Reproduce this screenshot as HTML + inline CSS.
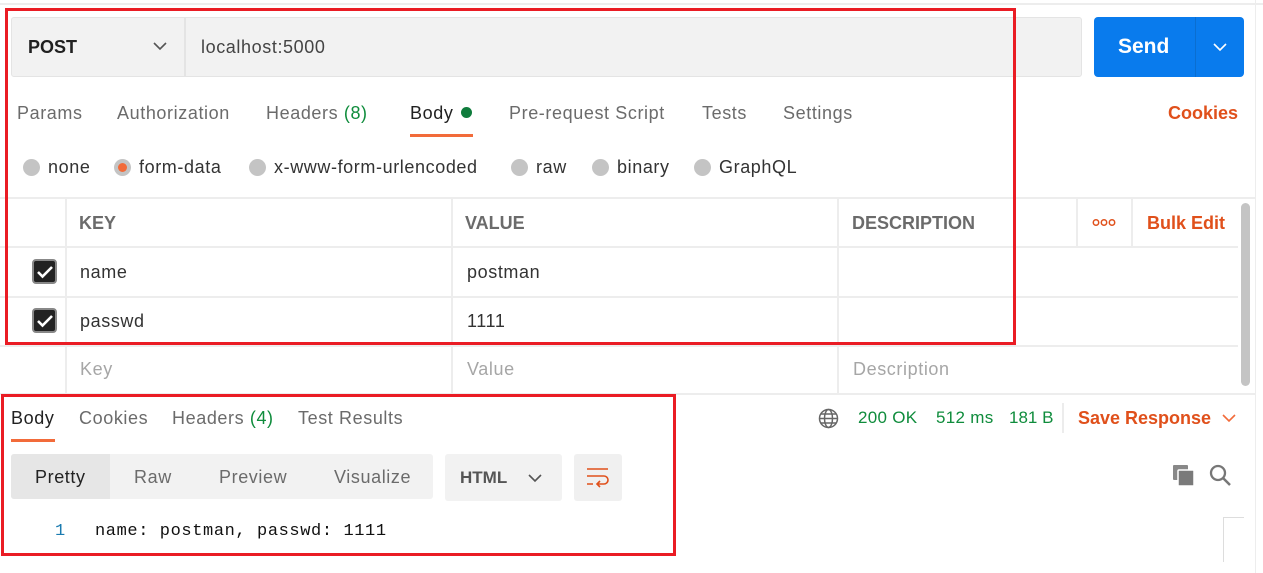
<!DOCTYPE html>
<html><head><meta charset="utf-8"><style>
*{margin:0;padding:0;box-sizing:border-box}
body{width:1263px;height:573px;background:#fff;position:relative;overflow:hidden;font-family:"Liberation Sans",sans-serif;font-size:18px;color:#212121;letter-spacing:0.6px}
.a{position:absolute;white-space:nowrap}
.b{font-weight:bold;letter-spacing:0}
.hl{position:absolute;height:2px;background:#ededed}
.vl{position:absolute;width:2px;background:#ededed}
.g{color:#6b6b6b}
.o{color:#e0501b}
.gr{color:#0f8c3c}
.rad{position:absolute;width:17px;height:17px;border-radius:50%;background:#c4c4c4}
.cb{position:absolute;width:25px;height:25px;background:#222;border:2px solid #888;border-radius:4px}
.red{position:absolute;border:3px solid #ea1c24}
</style></head><body>
<div class="hl" style="left:0;top:3px;width:1263px"></div>
<div class="vl" style="left:1255px;top:0;height:573px;width:1px"></div>

<div class="a" style="left:11px;top:17px;width:1071px;height:60px;background:#f2f2f2;border:1px solid #e4e4e4;border-radius:3px"></div>
<div class="vl" style="left:184px;top:18px;height:58px;background:#e4e4e4"></div>
<div class="a b" style="left:28px;top:37px;font-size:18px;color:#212121">POST</div>
<svg class="a" style="left:153px;top:42px" width="14" height="9"><path d="M1 1l6 6 6-6" stroke="#555" stroke-width="1.6" fill="none"/></svg>
<div class="a" style="left:201px;top:37px;color:#444">localhost:5000</div>

<div class="a" style="left:1094px;top:17px;width:150px;height:60px;background:#097bed;border-radius:4px"></div>
<div class="a" style="left:1195px;top:17px;width:1px;height:60px;background:#0a6ed0"></div>
<div class="a b" style="left:1118px;top:35px;color:#fff;font-size:21px">Send</div>
<svg class="a" style="left:1213px;top:43px" width="14" height="9"><path d="M1 1l6 6 6-6" stroke="#fff" stroke-width="1.6" fill="none"/></svg>

<div class="a g" style="left:17px;top:103px">Params</div>
<div class="a g" style="left:117px;top:103px">Authorization</div>
<div class="a g" style="left:266px;top:103px">Headers <span class="gr">(8)</span></div>
<div class="a" style="left:410px;top:103px">Body</div>
<div class="a" style="left:461px;top:107px;width:11px;height:11px;border-radius:50%;background:#0f7c3c"></div>
<div class="a" style="left:410px;top:134px;width:63px;height:3px;background:#f26b3a"></div>
<div class="a g" style="left:509px;top:103px">Pre-request Script</div>
<div class="a g" style="left:702px;top:103px">Tests</div>
<div class="a g" style="left:783px;top:103px">Settings</div>
<div class="a o b" style="left:1168px;top:103px">Cookies</div>

<div class="rad" style="left:23px;top:159px"></div><div class="a" style="left:48px;top:157px;color:#333">none</div>
<div class="rad" style="left:114px;top:159px"></div><div class="a" style="left:118px;top:163px;width:9px;height:9px;border-radius:50%;background:#f26b3a"></div><div class="a" style="left:139px;top:157px;color:#333">form-data</div>
<div class="rad" style="left:249px;top:159px"></div><div class="a" style="left:274px;top:157px;color:#333">x-www-form-urlencoded</div>
<div class="rad" style="left:511px;top:159px"></div><div class="a" style="left:536px;top:157px;color:#333">raw</div>
<div class="rad" style="left:592px;top:159px"></div><div class="a" style="left:617px;top:157px;color:#333">binary</div>
<div class="rad" style="left:694px;top:159px"></div><div class="a" style="left:719px;top:157px;color:#333">GraphQL</div>

<div class="hl" style="left:0;top:197px;width:1255px"></div>
<div class="hl" style="left:0;top:246px;width:1238px"></div>
<div class="hl" style="left:0;top:296px;width:1238px"></div>
<div class="hl" style="left:0;top:345px;width:1238px"></div>
<div class="hl" style="left:0;top:393px;width:1255px"></div>
<div class="vl" style="left:65px;top:198px;height:195px"></div>
<div class="vl" style="left:451px;top:198px;height:195px"></div>
<div class="vl" style="left:837px;top:198px;height:195px"></div>
<div class="vl" style="left:1076px;top:198px;height:49px"></div>
<div class="vl" style="left:1131px;top:198px;height:49px"></div>
<div class="a" style="left:1241px;top:203px;width:9px;height:183px;border-radius:5px;background:#c4c4c4"></div>

<div class="a g b" style="left:79px;top:213px">KEY</div>
<div class="a g b" style="left:465px;top:213px">VALUE</div>
<div class="a g b" style="left:852px;top:213px">DESCRIPTION</div>
<svg class="a" style="left:1092px;top:218px" width="24" height="9"><g stroke="#e0501b" stroke-width="1.5" fill="none"><circle cx="4" cy="4.5" r="2.7"/><circle cx="12" cy="4.5" r="2.7"/><circle cx="20" cy="4.5" r="2.7"/></g></svg>
<div class="a o b" style="left:1147px;top:213px">Bulk Edit</div>

<div class="cb" style="left:32px;top:259px"></div>
<svg class="a" style="left:36px;top:264px" width="18" height="15"><path d="M2 8l4.5 4.5L16 3" stroke="#fff" stroke-width="2.6" fill="none"/></svg>
<div class="a" style="left:80px;top:262px;color:#333">name</div>
<div class="a" style="left:467px;top:262px;color:#333">postman</div>
<div class="cb" style="left:32px;top:308px"></div>
<svg class="a" style="left:36px;top:313px" width="18" height="15"><path d="M2 8l4.5 4.5L16 3" stroke="#fff" stroke-width="2.6" fill="none"/></svg>
<div class="a" style="left:80px;top:311px;color:#333">passwd</div>
<div class="a" style="left:467px;top:311px;color:#333">1111</div>
<div class="a" style="left:80px;top:359px;color:#a6a6a6">Key</div>
<div class="a" style="left:467px;top:359px;color:#a6a6a6">Value</div>
<div class="a" style="left:853px;top:359px;color:#a6a6a6">Description</div>

<div class="a" style="left:11px;top:408px;color:#212121">Body</div>
<div class="a" style="left:11px;top:439px;width:44px;height:3px;background:#f26b3a"></div>
<div class="a g" style="left:79px;top:408px">Cookies</div>
<div class="a g" style="left:172px;top:408px">Headers <span class="gr">(4)</span></div>
<div class="a g" style="left:298px;top:408px">Test Results</div>

<svg class="a" style="left:818px;top:408px" width="21" height="21"><g stroke="#666" stroke-width="1.5" fill="none"><circle cx="10.5" cy="10.5" r="9"/><ellipse cx="10.5" cy="10.5" rx="4" ry="9"/><path d="M1.5 10.5h18M3 6h15M3 15h15"/></g></svg>
<div class="a gr" style="left:858px;top:408px;font-size:17px;letter-spacing:0.3px">200 OK</div>
<div class="a gr" style="left:936px;top:408px;font-size:17px;letter-spacing:0.3px">512 ms</div>
<div class="a gr" style="left:1009px;top:408px;font-size:17px;letter-spacing:0">181 B</div>
<div class="a" style="left:1062px;top:403px;width:2px;height:30px;background:#ececec"></div>
<div class="a o b" style="left:1078px;top:408px">Save Response</div>
<svg class="a" style="left:1222px;top:414px" width="14" height="9"><path d="M1 1l6 6 6-6" stroke="#f26b3a" stroke-width="1.6" fill="none"/></svg>

<div class="a" style="left:11px;top:454px;width:422px;height:45px;background:#f2f2f2;border-radius:3px"></div>
<div class="a" style="left:11px;top:454px;width:99px;height:45px;background:#e6e6e6;border-radius:3px 0 0 3px"></div>
<div class="a" style="left:35px;top:467px;color:#222">Pretty</div>
<div class="a g" style="left:134px;top:467px">Raw</div>
<div class="a g" style="left:219px;top:467px">Preview</div>
<div class="a g" style="left:334px;top:467px">Visualize</div>
<div class="a" style="left:445px;top:454px;width:117px;height:47px;background:#f2f2f2;border-radius:3px"></div>
<div class="a b" style="left:460px;top:468px;color:#555;font-size:17px">HTML</div>
<svg class="a" style="left:528px;top:474px" width="14" height="9"><path d="M1 1l6 6 6-6" stroke="#555" stroke-width="1.6" fill="none"/></svg>
<div class="a" style="left:574px;top:454px;width:48px;height:47px;background:#f0f0f0;border-radius:3px"></div>
<svg class="a" style="left:586px;top:467px" width="24" height="22"><g stroke="#e0501b" stroke-width="1.6" fill="none"><path d="M1 2h21M1 9h17a4 4 0 0 1 0 8h-6M1 17h6"/><path d="M14 14l-3 3 3 3"/></g></svg>

<div class="a" style="left:55px;top:522px;font-family:'Liberation Mono',monospace;font-size:17px;color:#1a7bb0;letter-spacing:0">1</div>
<div class="a" style="left:95px;top:522px;font-family:'Liberation Mono',monospace;font-size:17px;color:#111;letter-spacing:0.6px">name: postman, passwd: 1111</div>

<svg class="a" style="left:1172px;top:464px" width="24" height="23"><rect x="1" y="1" width="15" height="15" fill="#888" rx="1"/><rect x="6" y="6" width="16" height="16" fill="#7a7a7a" stroke="#fff" stroke-width="1.5" rx="1"/></svg>
<svg class="a" style="left:1209px;top:464px" width="23" height="23"><circle cx="9" cy="9" r="7" stroke="#777" stroke-width="2.3" fill="none"/><path d="M14 14l7 7" stroke="#777" stroke-width="2.5"/></svg>
<div class="a" style="left:1223px;top:517px;width:21px;height:1px;background:#ddd"></div>
<div class="a" style="left:1223px;top:517px;width:1px;height:45px;background:#ddd"></div>

<div class="red" style="left:5px;top:8px;width:1011px;height:337px"></div>
<div class="red" style="left:1px;top:394px;width:675px;height:162px"></div>
</body></html>
